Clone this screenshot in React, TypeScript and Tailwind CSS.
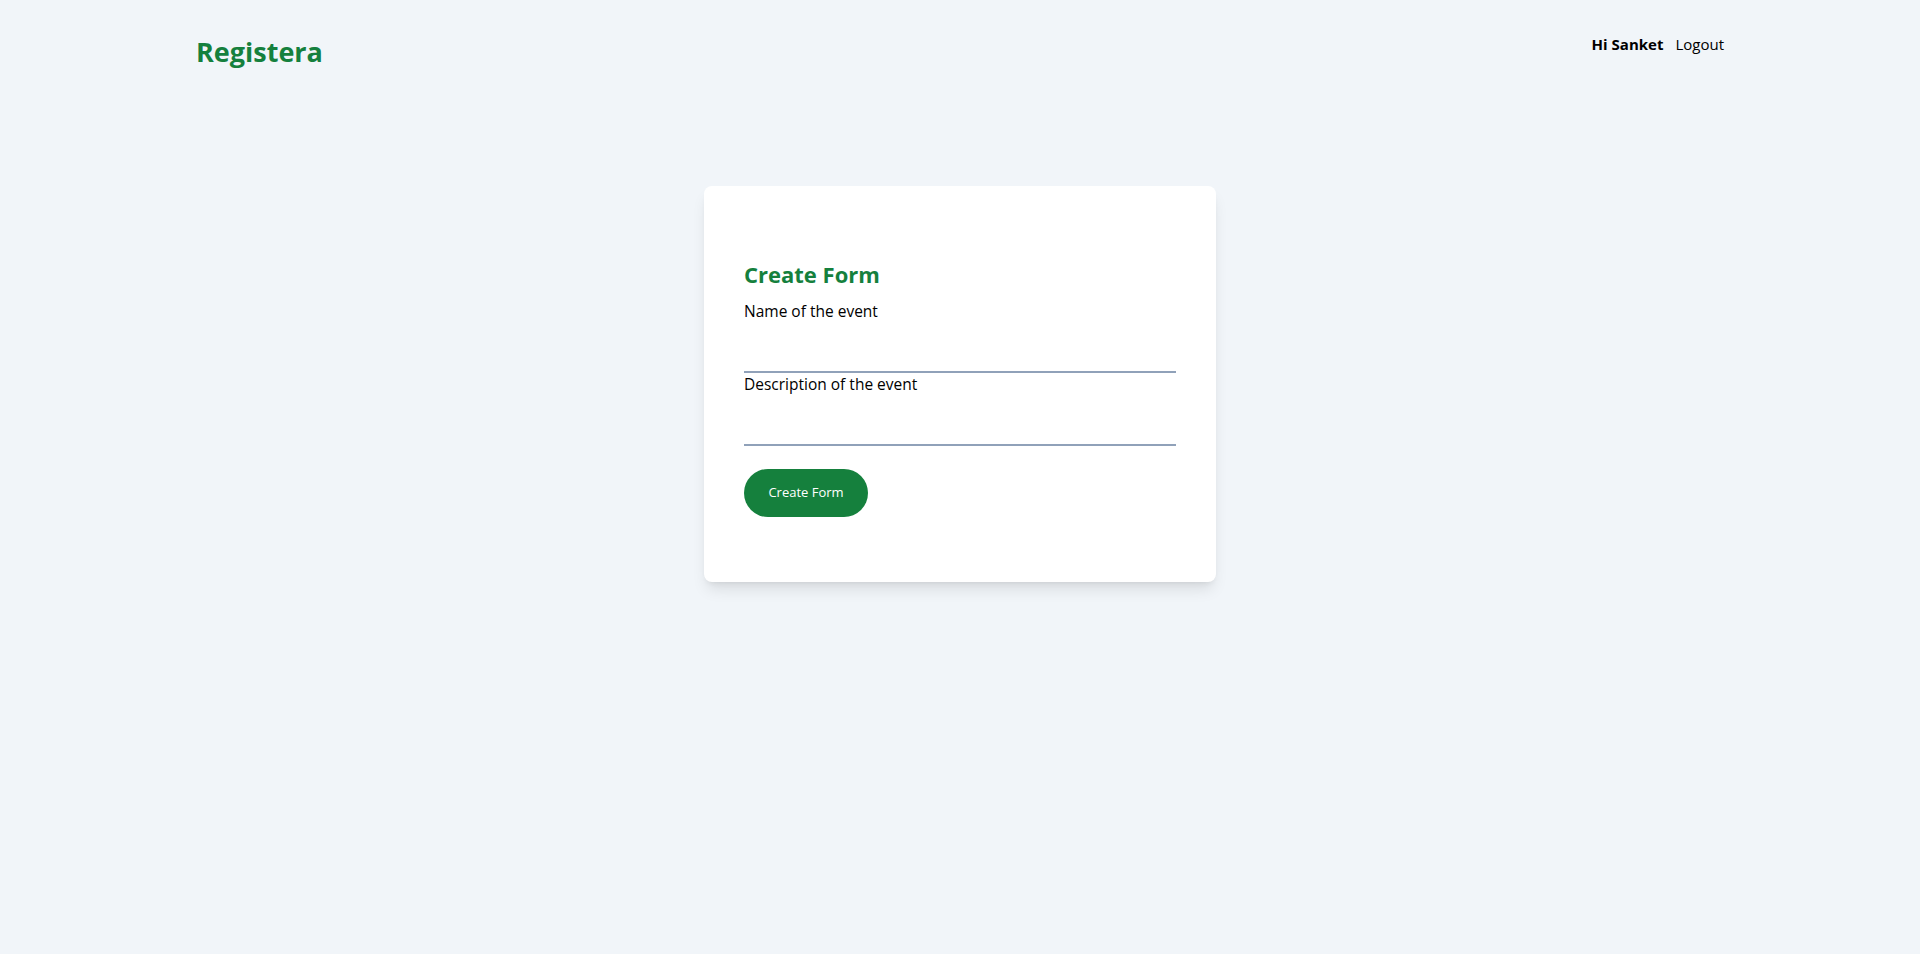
import React from "react";

const font = { fontFamily: '"Open Sans", "Noto Sans", sans-serif' };

const App = () => {
  return (
    <div className="min-h-screen bg-[#f1f5f9]" style={font}>
      <header className="mx-auto flex max-w-[1528px] items-start justify-between pt-[30px]">
        <h1 className="mt-[4px] text-[27px] font-bold leading-[36px] text-[#15803d]">Registera</h1>
        <div className="flex items-center gap-[12px] pt-[2px] text-[15px] leading-[24px] text-black">
          <span className="font-bold">Hi Sanket</span>
          <button>Logout</button>
        </div>
      </header>

      <main className="flex justify-center pt-[116px]">
        <div className="w-[512px] rounded-lg bg-white px-10 pb-[65px] pt-[72px] shadow-lg">
          <h2 className="text-[22px] font-bold leading-[32px] text-[#15803d]">Create Form</h2>
          <form className="mt-[9px] flex flex-col" onSubmit={(e) => e.preventDefault()}>
            <label className="text-[15.5px] leading-[24px] text-black">Name of the event</label>
            <input
              type="text"
              className="mt-[5px] h-[45px] border-b-2 border-slate-400 bg-transparent outline-none"
            />
            <label className="-mt-px text-[15.5px] leading-[24px] text-black">Description of the event</label>
            <input
              type="text"
              className="mt-[5px] h-[45px] border-b-2 border-slate-400 bg-transparent outline-none"
            />
            <div className="mt-[23px]">
              <button className="h-12 w-[124px] rounded-full bg-[#15803d] text-[13px] text-white">
                Create Form
              </button>
            </div>
          </form>
        </div>
      </main>
    </div>
  );
};

export default App;
